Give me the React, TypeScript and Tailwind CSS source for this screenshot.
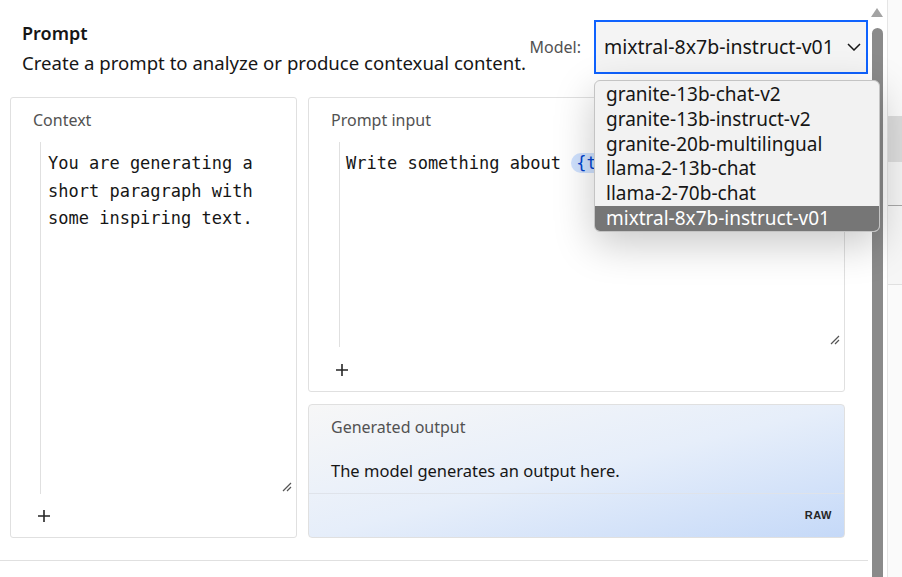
import { FC } from "react";

const models = [
  "granite-13b-chat-v2",
  "granite-13b-instruct-v2",
  "granite-20b-multilingual",
  "llama-2-13b-chat",
  "llama-2-70b-chat",
  "mixtral-8x7b-instruct-v01",
];

const Plus: FC = () => (
  <svg width="14" height="14" viewBox="0 0 14 14" className="block">
    <path d="M7 1v12M1 7h12" stroke="#262626" strokeWidth="1.6" />
  </svg>
);

const ResizeHandle: FC = () => (
  <svg
    width="10"
    height="10"
    viewBox="0 0 10 10"
    className="absolute right-[2px] bottom-[2px]"
  >
    <path d="M9 1L1 9M9 5L5 9" stroke="#555" strokeWidth="1.2" />
  </svg>
);

const Chevron: FC = () => (
  <svg width="14" height="8" viewBox="0 0 14 8">
    <path d="M1 1l6 6 6-6" fill="none" stroke="#161616" strokeWidth="1.5" />
  </svg>
);

const mono = "font-['DejaVu_Sans_Mono','Liberation_Mono',monospace]";

export default function App() {
  return (
    <div className="relative flex h-[577px] w-[902px] overflow-hidden bg-white font-['Noto_Sans','Open_Sans',sans-serif] text-[#161616]">
      <div className="w-[870px] shrink-0">
        {/* header */}
        <div className="flex items-start px-[22px] pt-[20px] pr-[2px]">
          <div className="mt-[2px]">
            <h1 className="text-[18px] leading-[22px] font-semibold">Prompt</h1>
            <p className="mt-[6px] text-[18.6px] leading-[26px] whitespace-nowrap">
              Create a prompt to analyze or produce contexual content.
            </p>
          </div>
          <div className="ml-auto flex items-center gap-[13px]">
            <span className="text-[16px] text-[#525252]">Model:</span>
            <div className="flex h-[54px] w-[274px] items-center justify-between border-2 border-[#0f62fe] bg-[#f4f4f4] pr-[5px] pl-[8px]">
              <span className="text-[19.5px]">mixtral-8x7b-instruct-v01</span>
              <Chevron />
            </div>
          </div>
        </div>

        {/* cards */}
        <div className="mt-[21px] flex gap-[11px] px-[10px]">
          <div className="flex h-[441px] w-[287px] flex-col rounded-[3px] border border-[#e0e0e0]">
            <div className="pt-[12px] pl-[22px] text-[16px] leading-[20px] text-[#525252]">
              Context
            </div>
            <div
              className={`relative mt-[12px] mr-[2px] ml-[29px] h-[352px] border-l border-[#e0e0e0] pt-[8px] pl-[7px] text-[17px] leading-[27.5px] ${mono}`}
            >
              You are generating a<br />
              short paragraph with<br />
              some inspiring text.
              <ResizeHandle />
            </div>
            <div className="mt-[15px] ml-[26px]">
              <Plus />
            </div>
          </div>

          <div className="flex w-[537px] flex-col gap-[12px]">
            <div className="flex h-[295px] flex-col rounded-[3px] border border-[#e0e0e0]">
              <div className="pt-[12px] pl-[22px] text-[16px] leading-[20px] text-[#525252]">
                Prompt input
              </div>
              <div
                className={`relative mt-[12px] mr-[2px] ml-[30px] h-[205px] border-l border-[#e0e0e0] pt-[8px] pl-[6px] text-[17px] leading-[27.5px] ${mono}`}
              >
                Write something about{" "}
                <span className="rounded-full bg-[#d0e2ff] px-[5px] text-[#0043ce]">
                  {"{topic}"}
                </span>
                <ResizeHandle />
              </div>
              <div className="mt-[16px] ml-[26px]">
                <Plus />
              </div>
            </div>

            <div className="flex h-[134px] flex-col rounded-[4px] border border-[#e0e0e0] bg-gradient-to-br from-[#f7f7f7] via-[#e6eefa] to-[#c5d9f8]">
              <div className="pt-[12px] pl-[22px] text-[16px] leading-[20px] text-[#525252]">
                Generated output
              </div>
              <div className="mt-[23px] pl-[22px] text-[16.5px] leading-[22px]">
                The model generates an output here.
              </div>
              <div className="mt-[11px] border-t border-[#dfe3ea]" />
              <div className="flex flex-1 items-center justify-end pr-[12px]">
                <span className="font-['Liberation_Sans_Narrow','Liberation_Sans',sans-serif] text-[11px] font-bold tracking-[0.5px] text-[#262626]">
                  RAW
                </span>
              </div>
            </div>
          </div>
        </div>

        <div className="mt-[22px] mr-[2px] border-t border-[#e0e0e0]" />
      </div>

      {/* scrollbar */}
      <div className="flex w-[13px] shrink-0 flex-col items-center pt-[8px] pl-[1px]">
        <div className="h-0 w-0 border-x-[6px] border-b-[9px] border-x-transparent border-b-[#a3a3a3]" />
        <div className="mt-[11px] w-[11px] flex-1 rounded-t-full bg-[#8a8a8a]" />
      </div>

      {/* next panel peeking */}
      <div className="ml-[4px] flex flex-1 flex-col border-l border-[#e5e5e5] bg-[#fafafa]">
        <div className="h-[116px]" />
        <div className="h-[46px] bg-[#dcdcdc]" />
        <div className="h-[44px] border-b border-[#a8a8a8] bg-[#f4f4f4]" />
        <div className="h-[79px] border-b border-[#e0e0e0] bg-[#f6f6f6]" />
      </div>

      {/* open dropdown */}
      <ul className="absolute top-[80px] left-[594px] w-[286px] overflow-hidden rounded-[6px] border border-[#c4c4c4] bg-[#f2f2f2] pt-[1px] shadow-[0_12px_40px_rgba(0,0,0,0.22)]">
        {models.map((m, i) => (
          <li
            key={m}
            className={`h-[24.8px] pl-[11px] text-[19px] leading-[24.8px] ${
              i === models.length - 1
                ? "bg-[#767676] text-white"
                : "text-[#161616]"
            }`}
          >
            {m}
          </li>
        ))}
      </ul>
    </div>
  );
}
